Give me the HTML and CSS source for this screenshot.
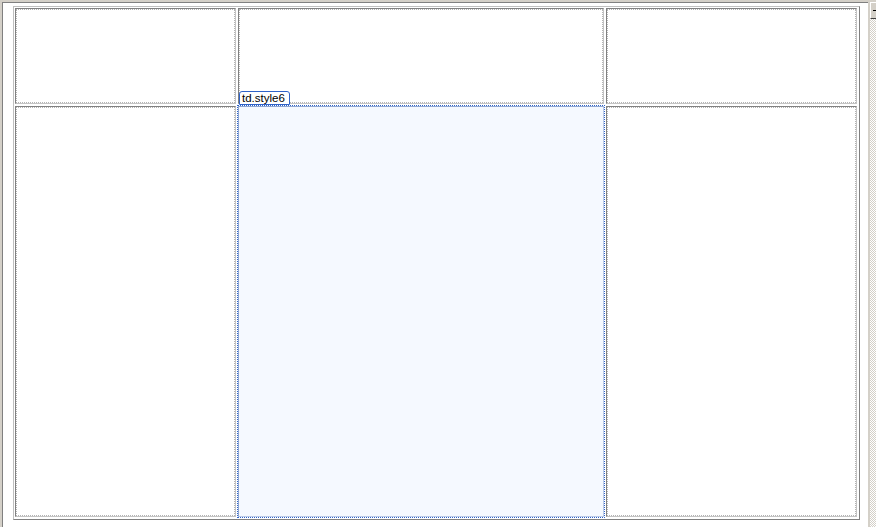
FILE: index.html
```html
<!DOCTYPE html>
<html>
<head>
<meta charset="utf-8">
<link rel="stylesheet" href="styles.css">
</head>
<body>
<div class="frame">
  <div class="editor">
    <div class="table">
      <div class="cell"></div>
      <div class="cell"></div>
      <div class="cell"></div>
      <div class="cell"></div>
      <div class="cell selected"><span class="tag">td.style6</span></div>
      <div class="cell"></div>
    </div>
  </div>
  <div class="scrollbar">
    <div class="up-btn"><span class="arrow"></span></div>
    <div class="track"></div>
  </div>
</div>
</body>
</html>
```

FILE: styles.css
```css
html, body {
  margin: 0;
  padding: 0;
  height: 100%;
  overflow: hidden;
}
body {
  background: #d4d0c8;
  font-family: "Liberation Sans", Arial, sans-serif;
}
.frame {
  display: flex;
  height: 527px;
  box-sizing: border-box;
  padding-top: 2px;
}
.editor {
  flex: 1;
  margin-left: 2px;
  margin-right: 2px;
  background: #fff;
  border-top: 1px solid #808080;
  border-left: 1px solid #808080;
}
.table {
  display: grid;
  grid-template-columns: 221px 366px 251px;
  grid-template-rows: 96px 411px;
  gap: 2px;
  width: fit-content;
  padding: 1px 2px 2px 1px;
  margin: 3px 0 0 10px;
  border: 1px solid;
  border-color: #c0c0c0 #808080 #808080 #c0c0c0;
}
.cell {
  position: relative;
  border: 1px solid;
  border-color: #808080 #c4c4c4 #c4c4c4 #808080;
  outline: 1px dotted #b4b4b4;
  outline-offset: -2px;
}
.cell.selected {
  background: #f5f9ff;
  border-color: #8ea6d2 #bccbe6 #bccbe6 #8ea6d2;
  outline: 1px dotted #2f63c9;
  outline-offset: 0;
}
.tag {
  position: absolute;
  top: -16px;
  left: 0;
  height: 12px;
  width: 47px;
  box-sizing: content-box;
  border: 1px solid #2f63c9;
  border-radius: 3px 3px 0 0;
  background: #fff;
  color: #000;
  font-size: 11.5px;
  line-height: 13px;
  padding-left: 2px;
  white-space: nowrap;
  overflow: hidden;
}
.scrollbar {
  width: 6px;
  display: flex;
  flex-direction: column;
}
.up-btn {
  height: 15px;
  background: #d4d0c8;
  border-top: 1px solid #fff;
  border-left: 1px solid #fff;
  border-bottom: 1px solid #404040;
  position: relative;
}
.arrow {
  position: absolute;
  left: 2px;
  top: 7px;
  width: 3px;
  height: 1px;
  background: #000;
}
.track {
  flex: 1;
  background-color: #fff;
  background-image: repeating-conic-gradient(#d4d0c8 0 25%, #fff 0 50%);
  background-size: 2px 2px;
}
```
